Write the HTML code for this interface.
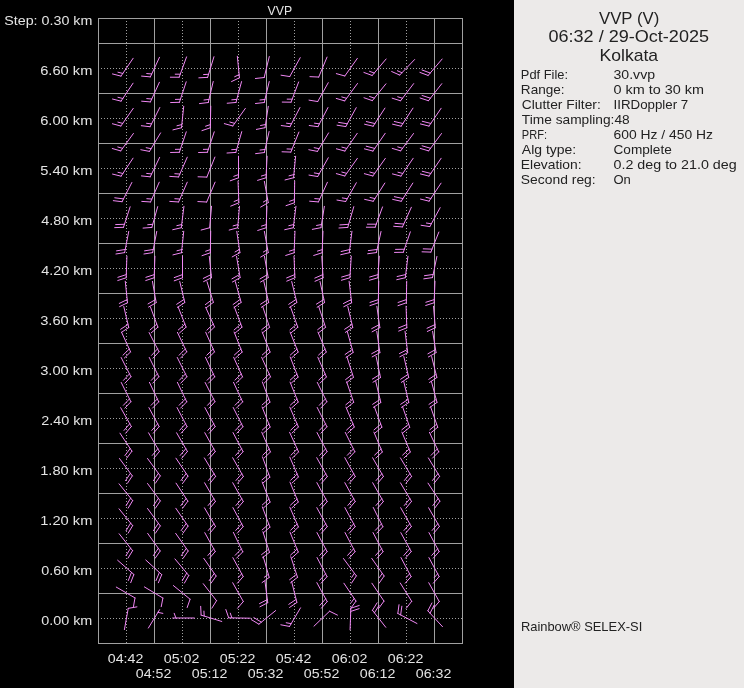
<!DOCTYPE html>
<html><head><meta charset="utf-8"><style>
html,body{margin:0;padding:0;background:#000;width:744px;height:688px;overflow:hidden}
svg{display:block;font-family:"Liberation Sans",sans-serif}
</style></head><body>
<svg width="744" height="688" viewBox="0 0 744 688">
<defs><filter id="gs" x="0" y="0" width="744" height="688" filterUnits="userSpaceOnUse"><feOffset dx="0" dy="0"/></filter></defs>
<rect x="0" y="0" width="744" height="688" fill="#000"/>
<rect x="514" y="0" width="230" height="688" fill="#eceae9"/>
<g shape-rendering="crispEdges">
<rect x="98.5" y="18.5" width="364" height="625" fill="none" stroke="#a0a0a0"/>
<line x1="126.5" y1="21" x2="126.5" y2="643" stroke="#a0a0a0" stroke-dasharray="1 2"/>
<line x1="154.5" y1="18" x2="154.5" y2="643" stroke="#a0a0a0"/>
<line x1="182.5" y1="21" x2="182.5" y2="643" stroke="#a0a0a0" stroke-dasharray="1 2"/>
<line x1="210.5" y1="18" x2="210.5" y2="643" stroke="#a0a0a0"/>
<line x1="238.5" y1="21" x2="238.5" y2="643" stroke="#a0a0a0" stroke-dasharray="1 2"/>
<line x1="266.5" y1="18" x2="266.5" y2="643" stroke="#a0a0a0"/>
<line x1="294.5" y1="21" x2="294.5" y2="643" stroke="#a0a0a0" stroke-dasharray="1 2"/>
<line x1="322.5" y1="18" x2="322.5" y2="643" stroke="#a0a0a0"/>
<line x1="350.5" y1="21" x2="350.5" y2="643" stroke="#a0a0a0" stroke-dasharray="1 2"/>
<line x1="378.5" y1="18" x2="378.5" y2="643" stroke="#a0a0a0"/>
<line x1="406.5" y1="21" x2="406.5" y2="643" stroke="#a0a0a0" stroke-dasharray="1 2"/>
<line x1="434.5" y1="18" x2="434.5" y2="643" stroke="#a0a0a0"/>
<line x1="98" y1="43.5" x2="462" y2="43.5" stroke="#a0a0a0"/>
<line x1="101" y1="68.5" x2="462" y2="68.5" stroke="#a0a0a0" stroke-dasharray="1 2"/>
<line x1="98" y1="93.5" x2="462" y2="93.5" stroke="#a0a0a0"/>
<line x1="101" y1="118.5" x2="462" y2="118.5" stroke="#a0a0a0" stroke-dasharray="1 2"/>
<line x1="98" y1="143.5" x2="462" y2="143.5" stroke="#a0a0a0"/>
<line x1="101" y1="168.5" x2="462" y2="168.5" stroke="#a0a0a0" stroke-dasharray="1 2"/>
<line x1="98" y1="193.5" x2="462" y2="193.5" stroke="#a0a0a0"/>
<line x1="101" y1="218.5" x2="462" y2="218.5" stroke="#a0a0a0" stroke-dasharray="1 2"/>
<line x1="98" y1="243.5" x2="462" y2="243.5" stroke="#a0a0a0"/>
<line x1="101" y1="268.5" x2="462" y2="268.5" stroke="#a0a0a0" stroke-dasharray="1 2"/>
<line x1="98" y1="293.5" x2="462" y2="293.5" stroke="#a0a0a0"/>
<line x1="101" y1="318.5" x2="462" y2="318.5" stroke="#a0a0a0" stroke-dasharray="1 2"/>
<line x1="98" y1="343.5" x2="462" y2="343.5" stroke="#a0a0a0"/>
<line x1="101" y1="368.5" x2="462" y2="368.5" stroke="#a0a0a0" stroke-dasharray="1 2"/>
<line x1="98" y1="393.5" x2="462" y2="393.5" stroke="#a0a0a0"/>
<line x1="101" y1="418.5" x2="462" y2="418.5" stroke="#a0a0a0" stroke-dasharray="1 2"/>
<line x1="98" y1="443.5" x2="462" y2="443.5" stroke="#a0a0a0"/>
<line x1="101" y1="468.5" x2="462" y2="468.5" stroke="#a0a0a0" stroke-dasharray="1 2"/>
<line x1="98" y1="493.5" x2="462" y2="493.5" stroke="#a0a0a0"/>
<line x1="101" y1="518.5" x2="462" y2="518.5" stroke="#a0a0a0" stroke-dasharray="1 2"/>
<line x1="98" y1="543.5" x2="462" y2="543.5" stroke="#a0a0a0"/>
<line x1="101" y1="568.5" x2="462" y2="568.5" stroke="#a0a0a0" stroke-dasharray="1 2"/>
<line x1="98" y1="593.5" x2="462" y2="593.5" stroke="#a0a0a0"/>
<line x1="101" y1="618.5" x2="462" y2="618.5" stroke="#a0a0a0" stroke-dasharray="1 2"/>
</g>
<path d="M133.15 58.25L120.98 76.10M120.98 76.10l-8.53 -2.17M122.78 73.45l-4.85 -1.23 M159.49 57.31L150.36 76.88M150.36 76.88l-8.77 -0.77M151.71 73.98l-4.98 -0.44 M186.54 56.91L179.15 77.21M179.15 77.21l-8.80 0.00M180.24 74.20l-5.00 0.00 M213.95 56.72L207.63 77.37M207.63 77.37l-8.79 0.46M208.57 74.31l-4.99 0.26 M237.33 56.26L239.47 77.75M239.47 77.75l-7.93 3.82M239.16 74.57l-4.51 2.17 M269.29 56.54L264.18 77.52M264.18 77.52l-8.75 0.97 M300.22 57.68L289.75 76.57M289.75 76.57l-8.69 -1.38 M327.03 57.11L318.73 77.05M318.73 77.05l-8.79 -0.40 M357.35 58.39L344.81 75.98M344.81 75.98l-8.48 -2.35 M386.12 58.99L372.17 75.49M372.17 75.49l-8.26 -3.04M374.24 73.04l-4.69 -1.73 M414.67 59.48L399.72 75.07M399.72 75.07l-8.05 -3.55M401.93 72.76l-4.57 -2.02 M442.15 59.01L428.15 75.46M428.15 75.46l-8.25 -3.07M430.22 73.03l-8.25 -3.07 M133.06 83.19L121.05 101.14M121.05 101.14l-8.55 -2.10M122.83 98.48l-4.86 -1.19 M159.41 82.27L150.42 101.91M150.42 101.91l-8.77 -0.71M151.75 99.00l-4.98 -0.40 M186.21 81.80L179.42 102.30M179.42 102.30l-8.80 0.26M180.43 99.27l-5.00 0.15 M213.21 81.52L208.25 102.54M208.25 102.54l-8.74 1.03M208.98 99.42l-4.97 0.58 M241.55 81.60L235.96 102.47M235.96 102.47l-8.77 0.77M236.79 99.38l-4.98 0.44 M269.25 81.53L264.21 102.53M264.21 102.53l-8.74 1.00M264.96 99.42l-4.97 0.57 M298.65 81.95L291.05 102.17M291.05 102.17l-8.80 -0.09M292.18 99.18l-5.00 -0.05 M328.26 82.70L317.72 101.55M317.72 101.55l-8.69 -1.41 M357.49 83.49L344.70 100.90M344.70 100.90l-8.45 -2.47M346.59 98.32l-4.80 -1.40 M385.93 83.83L372.33 100.62M372.33 100.62l-8.32 -2.86M374.35 98.13l-4.73 -1.63 M413.65 83.61L400.56 100.80M400.56 100.80l-8.40 -2.62M402.50 98.25l-4.77 -1.49 M441.76 83.70L428.47 100.72M428.47 100.72l-8.37 -2.72M430.44 98.20l-8.37 -2.72 M133.27 108.33L120.88 126.03M120.88 126.03l-8.50 -2.28M122.71 123.41l-4.83 -1.29 M159.82 107.47L150.08 126.75M150.08 126.75l-8.74 -1.04M151.52 123.89l-4.96 -0.59 M183.73 106.26L181.48 127.75M181.48 127.75l-8.54 2.13M181.81 124.56l-4.85 1.21 M210.77 106.20L210.28 127.80M210.28 127.80l-8.34 2.82M210.35 124.60l-4.74 1.60 M245.35 108.39L232.81 125.98M232.81 125.98l-8.48 -2.35M234.67 123.37l-4.82 -1.34 M268.28 106.34L265.02 127.69M265.02 127.69l-8.63 1.72M265.50 124.52l-4.90 0.98 M299.95 107.53L289.97 126.69M289.97 126.69l-8.72 -1.15M291.45 123.85l-4.96 -0.65 M327.97 107.54L317.96 126.68M317.96 126.68l-8.72 -1.16M319.44 123.85l-4.96 -0.66 M356.22 107.68L345.75 126.57M345.75 126.57l-8.69 -1.38M347.30 123.77l-8.69 -1.38 M384.93 108.10L373.16 126.22M373.16 126.22l-8.57 -1.98M374.91 123.54l-8.57 -1.98 M412.96 108.13L401.13 126.20M401.13 126.20l-8.57 -2.01M402.89 123.52l-8.57 -2.01 M441.15 108.25L428.98 126.10M428.98 126.10l-8.53 -2.17M430.78 123.45l-8.53 -2.17 M133.44 133.45L120.74 150.93M120.74 150.93l-8.46 -2.43M122.62 148.34l-4.81 -1.38 M160.58 132.89L149.45 151.40M149.45 151.40l-8.64 -1.68M151.10 148.66l-4.91 -0.95 M186.28 131.82L179.36 152.28M179.36 152.28l-8.80 0.20M180.38 149.25l-5.00 0.11 M214.26 131.82L207.37 152.29M207.37 152.29l-8.80 0.22M208.39 149.26l-5.00 0.12 M241.75 131.66L235.80 152.42M235.80 152.42l-8.78 0.61M236.68 149.34l-4.99 0.35 M269.13 131.50L264.31 152.55M264.31 152.55l-8.73 1.09M265.03 149.43l-4.96 0.62 M298.92 132.06L290.83 152.09M290.83 152.09l-8.79 -0.31M292.03 149.12l-5.00 -0.17 M328.58 132.89L317.45 151.40M317.45 151.40l-8.64 -1.68M319.10 148.66l-4.91 -0.95 M357.23 133.31L344.91 151.05M344.91 151.05l-8.51 -2.25M346.73 148.42l-4.83 -1.28 M385.20 133.29L372.94 151.07M372.94 151.07l-8.52 -2.22M374.75 148.43l-8.52 -2.22 M413.52 133.51L400.67 150.88M400.67 150.88l-8.44 -2.50M402.57 148.31l-4.79 -1.42 M441.52 133.51L428.67 150.88M428.67 150.88l-8.44 -2.50M430.57 148.31l-8.44 -2.50 M133.03 158.17L121.08 176.16M121.08 176.16l-8.55 -2.07M122.85 173.50l-4.86 -1.18 M159.64 157.38L150.23 176.82M150.23 176.82l-8.75 -0.89M151.63 173.94l-4.97 -0.51 M187.26 157.20L178.55 176.97M178.55 176.97l-8.78 -0.58M179.84 174.04l-4.99 -0.33 M214.92 157.06L206.83 177.09M206.83 177.09l-8.79 -0.31 M238.50 156.20L238.50 177.80M238.50 177.80l-8.27 3.01M238.50 174.60l-4.70 1.71 M267.12 156.22L265.99 177.79M265.99 177.79l-8.42 2.57M266.15 174.59l-4.78 1.46 M295.63 156.25L293.56 177.75M293.56 177.75l-8.52 2.20M293.87 174.57l-4.84 1.25 M328.29 157.72L317.69 176.54M317.69 176.54l-8.68 -1.44M319.26 173.75l-4.93 -0.82 M357.35 158.39L344.81 175.98M344.81 175.98l-8.48 -2.35M346.67 173.37l-4.82 -1.34 M385.32 158.37L372.84 176.00M372.84 176.00l-8.49 -2.32M374.69 173.39l-4.82 -1.32 M413.17 158.26L400.96 176.09M400.96 176.09l-8.52 -2.19M402.77 173.45l-4.84 -1.24 M441.15 158.25L428.98 176.10M428.98 176.10l-8.53 -2.17M430.78 173.45l-8.53 -2.17 M131.86 182.49L122.05 201.73M122.05 201.73l-8.73 -1.07M123.50 198.88l-8.73 -1.07 M159.26 182.20L150.55 201.97M150.55 201.97l-8.78 -0.58M151.84 199.04l-4.99 -0.33 M187.26 182.20L178.55 201.97M178.55 201.97l-8.78 -0.58M179.84 199.04l-4.99 -0.33 M215.11 182.14L206.67 202.02M206.67 202.02l-8.79 -0.46 M238.05 181.21L238.88 202.79M238.88 202.79l-8.15 3.32M238.75 199.60l-4.63 1.89 M264.37 181.39L268.27 202.64M268.27 202.64l-7.59 4.45M267.69 199.49l-4.31 2.53 M294.69 181.20L294.35 202.80M294.35 202.80l-8.32 2.88M294.40 199.60l-4.72 1.64 M327.41 182.27L318.42 201.91M318.42 201.91l-8.77 -0.71M319.75 199.00l-4.98 -0.40 M356.33 182.74L345.66 201.52M345.66 201.52l-8.68 -1.47M347.24 198.74l-4.93 -0.83 M384.84 183.05L373.23 201.27M373.23 201.27l-8.59 -1.90M374.95 198.57l-4.88 -1.08 M412.84 183.05L401.23 201.27M401.23 201.27l-8.59 -1.90M402.95 198.57l-8.59 -1.90 M441.03 183.17L429.08 201.16M429.08 201.16l-8.55 -2.07M430.85 198.50l-4.86 -1.18 M130.15 206.78L123.47 227.32M123.47 227.32l-8.79 0.31M124.46 224.28l-8.79 0.31 M157.69 206.64L151.85 227.43M151.85 227.43l-8.78 0.66M152.71 224.35l-4.99 0.37 M183.94 206.29L181.31 227.73M181.31 227.73l-8.57 1.98M181.70 224.55l-4.87 1.12 M211.53 206.24L209.65 227.76M209.65 227.76l-8.50 2.28 M239.49 206.24L237.68 227.77M237.68 227.77l-8.49 2.31M237.95 224.58l-4.83 1.31 M266.97 206.21L266.11 227.79M266.11 227.79l-8.38 2.68M266.24 224.59l-4.76 1.52 M295.94 206.29L293.31 227.73M293.31 227.73l-8.57 1.98M293.70 224.55l-4.87 1.12 M324.35 206.35L320.97 227.68M320.97 227.68l-8.64 1.68M321.47 224.52l-4.91 0.95 M353.81 206.67L347.75 227.41M347.75 227.41l-8.78 0.57M348.65 224.33l-8.78 0.57 M382.54 206.91L375.15 227.21M375.15 227.21l-8.80 0.00M376.24 224.20l-8.80 0.00 M411.36 207.25L402.47 226.93M402.47 226.93l-8.78 -0.66M403.78 224.02l-8.78 -0.66 M440.17 207.65L429.79 226.60M429.79 226.60l-8.70 -1.33M431.33 223.79l-4.94 -0.76 M128.75 231.42L124.63 252.62M124.63 252.62l-8.69 1.38M125.24 249.48l-8.69 1.38 M156.75 231.42L152.63 252.62M152.63 252.62l-8.69 1.38M153.24 249.48l-8.69 1.38 M183.73 231.26L181.48 252.75M181.48 252.75l-8.54 2.13M181.81 249.56l-4.85 1.21 M210.71 231.20L210.33 252.80M210.33 252.80l-8.32 2.86M210.38 249.60l-4.73 1.63 M236.78 231.33L239.93 252.69M239.93 252.69l-7.74 4.19M239.46 249.53l-4.40 2.38 M264.37 231.39L268.27 252.64M268.27 252.64l-7.59 4.45M267.69 249.49l-4.31 2.53 M294.97 231.21L294.11 252.79M294.11 252.79l-8.38 2.68M294.24 249.59l-4.76 1.52 M322.97 231.21L322.11 252.79M322.11 252.79l-8.38 2.68M322.24 249.59l-4.76 1.52 M351.94 231.29L349.31 252.73M349.31 252.73l-8.57 1.98M349.70 249.55l-8.57 1.98 M381.03 231.48L376.40 252.57M376.40 252.57l-8.72 1.16M377.08 249.45l-8.72 1.16 M410.34 231.84L403.31 252.27M403.31 252.27l-8.80 0.15M404.35 249.24l-8.80 0.15 M438.88 232.04L430.86 252.10M430.86 252.10l-8.80 -0.28M432.05 249.13l-8.80 -0.28 M126.91 256.21L126.16 277.79M126.16 277.79l-8.37 2.72M126.27 274.60l-8.37 2.72 M154.91 256.21L154.16 277.79M154.16 277.79l-8.37 2.72M154.27 274.60l-8.37 2.72 M182.50 256.20L182.50 277.80M182.50 277.80l-8.27 3.01M182.50 274.60l-8.27 3.01 M209.27 256.26L211.52 277.75M211.52 277.75l-7.91 3.86M211.19 274.56l-7.91 3.86 M236.55 256.36L240.12 277.67M240.12 277.67l-7.66 4.33M239.59 274.51l-7.66 4.33 M264.45 256.38L268.20 277.65M268.20 277.65l-7.62 4.40M267.65 274.50l-7.62 4.40 M294.01 256.21L294.91 277.79M294.91 277.79l-8.14 3.35M294.78 274.59l-8.14 3.35 M321.78 256.22L323.10 277.78M323.10 277.78l-8.07 3.51M322.90 274.59l-8.07 3.51 M351.26 256.22L349.87 277.78M349.87 277.78l-8.45 2.47M350.07 274.59l-8.45 2.47 M379.26 256.22L377.87 277.78M377.87 277.78l-8.45 2.47M378.07 274.59l-8.45 2.47 M407.94 256.29L405.31 277.73M405.31 277.73l-8.57 1.98M405.70 274.55l-8.57 1.98 M436.91 256.45L432.50 277.59M432.50 277.59l-8.71 1.26M433.15 274.46l-8.71 1.26 M125.27 281.26L127.52 302.75M127.52 302.75l-7.91 3.86M127.19 299.56l-7.91 3.86 M152.45 281.38L156.20 302.65M156.20 302.65l-7.62 4.40M155.65 299.50l-7.62 4.40 M179.75 281.53L184.79 302.53M184.79 302.53l-7.34 4.86M184.04 299.42l-7.34 4.86 M207.05 281.72L213.37 302.37M213.37 302.37l-7.03 5.30M212.43 299.31l-7.03 5.30 M235.33 281.63L241.14 302.44M241.14 302.44l-7.16 5.12M240.27 299.36l-7.16 5.12 M263.85 281.50L268.70 302.55M268.70 302.55l-7.38 4.79M267.98 299.43l-7.38 4.79 M291.71 281.54L296.82 302.52M296.82 302.52l-7.32 4.88M296.06 299.41l-7.32 4.88 M320.01 281.47L324.57 302.58M324.57 302.58l-7.45 4.69M323.89 299.45l-7.45 4.69 M349.10 281.28L351.66 302.73M351.66 302.73l-7.85 3.97M351.28 299.55l-7.85 3.97 M378.77 281.20L378.28 302.80M378.28 302.80l-8.34 2.82M378.35 299.60l-8.34 2.82 M406.71 281.20L406.33 302.80M406.33 302.80l-8.32 2.86M406.38 299.60l-8.32 2.86 M434.97 281.21L434.11 302.79M434.11 302.79l-8.38 2.68M434.24 299.59l-8.38 2.68 M123.79 306.52L128.75 327.54M128.75 327.54l-7.36 4.83M128.02 324.42l-7.36 4.83 M150.41 306.93L157.90 327.19M157.90 327.19l-6.71 5.69M156.79 324.19l-6.71 5.69 M178.18 307.02L186.09 327.12M186.09 327.12l-6.59 5.83M184.92 324.14l-6.59 5.83 M205.64 307.25L214.53 326.93M214.53 326.93l-6.30 6.15M213.22 324.02l-6.30 6.15 M234.35 306.95L241.95 327.17M241.95 327.17l-6.68 5.73M240.82 324.18l-6.68 5.73 M262.81 306.79L269.56 327.31M269.56 327.31l-6.92 5.44M268.56 324.27l-6.92 5.44 M290.50 306.90L297.82 327.22M297.82 327.22l-6.76 5.63M296.74 324.21l-6.76 5.63 M318.81 306.79L325.56 327.31M325.56 327.31l-6.92 5.44M324.56 324.27l-6.92 5.44 M347.79 306.52L352.75 327.54M352.75 327.54l-7.36 4.83M352.02 324.42l-7.36 4.83 M376.86 306.31L379.86 327.70M379.86 327.70l-7.77 4.13M379.42 324.54l-7.77 4.13 M406.09 306.21L406.84 327.79M406.84 327.79l-8.16 3.30M406.73 324.60l-8.16 3.30 M433.53 306.24L435.30 327.77M435.30 327.77l-7.99 3.68M435.04 324.58l-7.99 3.68 M121.59 332.27L130.58 351.91M130.58 351.91l-6.27 6.18M129.25 349.00l-6.27 6.18 M149.09 332.51L158.99 351.71M158.99 351.71l-5.97 6.47M157.53 348.86l-5.97 6.47 M177.44 332.34L186.70 351.85M186.70 351.85l-6.18 6.27M185.33 348.96l-6.18 6.27 M205.70 332.22L214.49 351.95M214.49 351.95l-6.33 6.11M213.18 349.03l-6.33 6.11 M234.12 332.04L242.14 352.10M242.14 352.10l-6.56 5.87M240.95 349.13l-6.56 5.87 M262.19 332.01L270.08 352.12M270.08 352.12l-6.60 5.82M268.91 349.14l-6.60 5.82 M290.12 332.04L298.14 352.10M298.14 352.10l-6.56 5.87M296.95 349.13l-6.56 5.87 M317.97 332.11L326.27 352.05M326.27 352.05l-6.48 5.96M325.04 349.09l-6.48 5.96 M347.33 331.63L353.14 352.44M353.14 352.44l-7.16 5.12M352.27 349.36l-7.16 5.12 M376.80 331.32L379.91 352.70M379.91 352.70l-7.75 4.17M379.45 349.53l-7.75 4.17 M405.04 331.29L407.71 352.72M407.71 352.72l-7.83 4.01M407.32 349.55l-7.83 4.01 M432.61 331.35L436.07 352.67M436.07 352.67l-7.68 4.29M435.56 349.52l-7.68 4.29 M121.14 357.49L130.95 376.73M130.95 376.73l-6.00 6.44M129.50 373.88l-6.00 6.44 M149.25 357.43L158.86 376.78M158.86 376.78l-6.07 6.37M157.43 373.91l-6.07 6.37 M177.25 357.43L186.86 376.78M186.86 376.78l-6.07 6.37M185.43 373.91l-6.07 6.37 M205.46 357.33L214.69 376.86M214.69 376.86l-6.19 6.26M213.32 373.97l-6.19 6.26 M233.64 357.25L242.53 376.93M242.53 376.93l-6.30 6.15M241.22 374.02l-6.30 6.15 M261.64 357.25L270.53 376.93M270.53 376.93l-6.30 6.15M269.22 374.02l-6.30 6.15 M290.19 357.01L298.08 377.12M298.08 377.12l-6.60 5.82M296.91 374.14l-6.60 5.82 M317.79 357.18L326.41 376.99M326.41 376.99l-6.38 6.06M325.13 374.05l-6.38 6.06 M346.93 356.75L353.46 377.34M353.46 377.34l-6.97 5.37M352.50 374.29l-6.97 5.37 M376.09 356.45L380.50 377.59M380.50 377.59l-7.48 4.64M379.85 374.46l-7.48 4.64 M403.83 356.51L408.72 377.54M408.72 377.54l-7.37 4.81M408.00 374.43l-7.37 4.81 M431.65 356.55L436.87 377.51M436.87 377.51l-7.30 4.92M436.10 374.40l-7.30 4.92 M121.22 382.45L130.89 401.76M130.89 401.76l-6.05 6.39M129.46 398.90l-6.05 6.39 M149.44 382.34L158.70 401.85M158.70 401.85l-6.18 6.27M157.33 398.96l-6.18 6.27 M177.40 382.36L186.73 401.84M186.73 401.84l-6.16 6.29M185.35 398.95l-6.16 6.29 M205.14 382.49L214.95 401.73M214.95 401.73l-6.00 6.44M213.50 398.88l-6.00 6.44 M233.51 382.31L242.64 401.88M242.64 401.88l-6.22 6.22M241.29 398.98l-6.22 6.22 M262.35 381.95L269.95 402.17M269.95 402.17l-6.68 5.73M268.82 399.18l-6.68 5.73 M290.06 382.07L298.19 402.08M298.19 402.08l-6.53 5.90M296.98 399.12l-6.53 5.90 M317.29 382.41L326.83 401.79M326.83 401.79l-6.09 6.35M325.41 398.92l-6.09 6.35 M346.66 381.84L353.69 402.27M353.69 402.27l-6.84 5.54M352.65 399.24l-6.84 5.54 M375.75 381.53L380.79 402.53M380.79 402.53l-7.34 4.86M380.04 399.42l-7.34 4.86 M403.75 381.53L408.79 402.53M408.79 402.53l-7.34 4.86M408.04 399.42l-7.34 4.86 M431.49 381.59L437.00 402.47M437.00 402.47l-7.23 5.02M436.19 399.38l-7.23 5.02 M120.69 407.73L131.33 426.53M131.33 426.53l-5.72 6.69M129.75 423.74l-5.72 6.69 M148.91 407.61L159.15 426.63M159.15 426.63l-5.85 6.57M157.63 423.81l-5.85 6.57 M177.03 407.54L187.04 426.68M187.04 426.68l-5.93 6.50M185.56 423.85l-5.93 6.50 M204.91 407.61L215.15 426.63M215.15 426.63l-5.85 6.57M213.63 423.81l-5.85 6.57 M233.18 407.47L242.92 426.75M242.92 426.75l-6.02 6.41M241.48 423.89l-6.02 6.41 M262.14 407.04L270.12 427.11M270.12 427.11l-6.57 5.85M268.94 424.13l-6.57 5.85 M289.79 407.18L298.41 426.99M298.41 426.99l-6.38 6.06M297.13 424.05l-6.38 6.06 M317.18 407.47L326.92 426.75M326.92 426.75l-6.02 6.41M325.48 423.89l-6.02 6.41 M345.95 407.11L354.28 427.04M354.28 427.04l-6.47 5.97M353.05 424.09l-6.47 5.97 M374.44 406.92L381.87 427.20M381.87 427.20l-6.73 5.67M380.77 424.20l-6.73 5.67 M402.62 406.86L409.72 427.25M409.72 427.25l-6.82 5.56M408.67 424.23l-6.82 5.56 M430.62 406.86L437.72 427.25M437.72 427.25l-6.82 5.56M436.67 424.23l-6.82 5.56 M119.97 433.17L131.92 451.16M131.92 451.16l-5.22 7.08M130.15 448.50l-5.22 7.08 M148.56 432.80L159.43 451.47M159.43 451.47l-5.63 6.76M157.82 448.70l-5.63 6.76 M176.60 432.78L187.40 451.49M187.40 451.49l-5.66 6.74M185.80 448.72l-5.66 6.74 M204.78 432.68L215.25 451.57M215.25 451.57l-5.77 6.64M213.70 448.77l-5.77 6.64 M233.01 432.55L243.06 451.68M243.06 451.68l-5.92 6.51M241.57 448.84l-5.92 6.51 M261.74 432.20L270.45 451.97M270.45 451.97l-6.35 6.09M269.16 449.04l-6.35 6.09 M289.59 432.27L298.58 451.91M298.58 451.91l-6.27 6.18M297.25 449.00l-6.27 6.18 M317.01 432.55L327.06 451.68M327.06 451.68l-5.92 6.51M325.57 448.84l-5.92 6.51 M345.29 432.41L354.83 451.79M354.83 451.79l-6.09 6.35M353.41 448.92l-6.09 6.35 M373.89 432.14L382.33 452.02M382.33 452.02l-6.44 6.00M381.08 449.08l-6.44 6.00 M401.89 432.14L410.33 452.02M410.33 452.02l-6.44 6.00M409.08 449.08l-6.44 6.00 M429.44 432.34L438.70 451.85M438.70 451.85l-6.18 6.27M437.33 448.96l-6.18 6.27 M119.48 458.51L132.33 475.88M132.33 475.88l-4.86 7.34M130.43 473.31l-4.86 7.34 M147.53 458.48L160.29 475.91M160.29 475.91l-4.90 7.31M158.40 473.33l-4.90 7.31 M175.95 458.18L187.94 476.15M187.94 476.15l-5.21 7.09M186.16 473.49l-5.21 7.09 M204.37 457.92L215.59 476.37M215.59 476.37l-5.50 6.87M213.93 473.64l-5.50 6.87 M232.69 457.73L243.33 476.53M243.33 476.53l-5.72 6.69M241.75 473.74l-5.72 6.69 M262.46 456.91L269.85 477.21M269.85 477.21l-6.74 5.66M268.76 474.20l-6.74 5.66 M289.79 457.18L298.41 476.99M298.41 476.99l-6.38 6.06M297.13 474.05l-6.38 6.06 M316.76 457.69L327.27 476.56M327.27 476.56l-5.76 6.65M325.71 473.77l-5.76 6.65 M344.82 457.66L355.22 476.59M355.22 476.59l-5.80 6.62M353.68 473.78l-5.80 6.62 M372.62 457.77L383.39 476.50M383.39 476.50l-5.67 6.73M381.79 473.72l-5.67 6.73 M400.42 457.89L411.55 476.40M411.55 476.40l-5.54 6.84M409.90 473.66l-5.54 6.84 M428.37 457.92L439.59 476.37M439.59 476.37l-5.50 6.87M437.93 473.64l-5.50 6.87 M119.07 483.83L132.67 500.62M132.67 500.62l-4.53 7.54M130.65 498.13l-4.53 7.54 M147.53 483.48L160.29 500.91M160.29 500.91l-4.90 7.31M158.40 498.33l-4.90 7.31 M176.04 483.13L187.87 501.20M187.87 501.20l-5.27 7.05M186.11 498.52l-5.27 7.05 M204.58 482.79L215.41 501.48M215.41 501.48l-5.64 6.75M213.81 498.71l-5.64 6.75 M232.73 482.71L243.30 501.55M243.30 501.55l-5.74 6.67M241.73 498.76l-5.74 6.67 M262.19 482.01L270.08 502.12M270.08 502.12l-6.60 5.82M268.91 499.14l-6.60 5.82 M289.97 482.11L298.27 502.05M298.27 502.05l-6.48 5.96M297.04 499.09l-6.48 5.96 M316.87 482.63L327.18 501.61M327.18 501.61l-5.83 6.59M325.65 498.80l-5.83 6.59 M344.82 482.66L355.22 501.59M355.22 501.59l-5.80 6.62M353.68 498.78l-5.80 6.62 M372.69 482.73L383.33 501.53M383.33 501.53l-5.72 6.69M381.75 498.74l-5.72 6.69 M400.49 482.84L411.49 501.44M411.49 501.44l-5.59 6.80M409.86 498.68l-5.59 6.80 M428.04 483.13L439.87 501.20M439.87 501.20l-5.27 7.05M438.11 498.52l-5.27 7.05 M119.07 508.83L132.67 525.62M132.67 525.62l-4.53 7.54M130.65 523.13l-4.53 7.54 M147.53 508.48L160.29 525.91M160.29 525.91l-4.90 7.31M158.40 523.33l-4.90 7.31 M175.83 508.26L188.04 526.09M188.04 526.09l-5.12 7.16M186.23 523.45l-5.12 7.16 M204.49 507.84L215.49 526.44M215.49 526.44l-5.59 6.80M213.86 523.68l-5.59 6.80 M232.91 507.61L243.15 526.63M243.15 526.63l-5.85 6.57M241.63 523.81l-5.85 6.57 M262.37 506.95L269.93 527.18M269.93 527.18l-6.69 5.72M268.81 524.18l-6.69 5.72 M289.79 507.18L298.41 526.99M298.41 526.99l-6.38 6.06M297.13 524.05l-6.38 6.06 M316.83 507.65L327.21 526.60M327.21 526.60l-5.81 6.61M325.67 523.79l-5.81 6.61 M344.91 507.61L355.15 526.63M355.15 526.63l-5.85 6.57M353.63 523.81l-5.85 6.57 M373.25 507.43L382.86 526.78M382.86 526.78l-6.07 6.37M381.43 523.91l-6.07 6.37 M400.69 507.73L411.33 526.53M411.33 526.53l-5.72 6.69M409.75 523.74l-5.72 6.69 M428.62 507.77L439.39 526.50M439.39 526.50l-5.67 6.73M437.79 523.72l-5.67 6.73 M119.15 533.77L132.60 550.67M132.60 550.67l-4.60 7.50M130.61 548.17l-4.60 7.50 M147.66 533.38L160.18 550.99M160.18 550.99l-5.00 7.24M158.32 548.38l-5.00 7.24 M175.68 533.37L188.16 551.00M188.16 551.00l-5.01 7.23M186.31 548.39l-5.01 7.23 M204.78 532.68L215.25 551.57M215.25 551.57l-5.77 6.64M213.70 548.77l-5.77 6.64 M233.36 532.38L242.77 551.82M242.77 551.82l-6.14 6.31M241.37 548.94l-6.14 6.31 M262.93 531.75L269.46 552.34M269.46 552.34l-6.97 5.37M268.50 549.29l-6.97 5.37 M289.97 532.11L298.27 552.05M298.27 552.05l-6.48 5.96M297.04 549.09l-6.48 5.96 M316.94 532.59L327.12 551.64M327.12 551.64l-5.88 6.55M325.61 548.82l-5.88 6.55 M345.01 532.55L355.06 551.68M355.06 551.68l-5.92 6.51M353.57 548.84l-5.92 6.51 M373.01 532.55L383.06 551.68M383.06 551.68l-5.92 6.51M381.57 548.84l-5.92 6.51 M400.82 532.66L411.22 551.59M411.22 551.59l-5.80 6.62M409.68 548.78l-5.80 6.62 M428.94 532.59L439.12 551.64M439.12 551.64l-5.88 6.55M437.61 548.82l-5.88 6.55 M117.62 560.23L133.87 574.46M133.87 574.46l-3.18 8.20M131.47 572.35l-3.18 8.20 M145.80 560.03L161.73 574.62M161.73 574.62l-3.37 8.13M159.37 572.46l-3.37 8.13 M174.95 558.93L188.77 575.53M188.77 575.53l-4.43 7.61M186.72 573.07l-4.43 7.61 M203.77 558.31L216.09 576.05M216.09 576.05l-5.07 7.19M214.27 573.42l-5.07 7.19 M232.85 557.64L243.19 576.60M243.19 576.60l-5.82 6.60M241.66 573.79l-3.31 3.75 M263.25 556.66L269.20 577.42M269.20 577.42l-7.12 5.17M268.32 574.34l-4.05 2.94 M290.85 556.78L297.53 577.32M297.53 577.32l-6.93 5.42M296.54 574.28l-6.93 5.42 M317.03 557.54L327.04 576.68M327.04 576.68l-5.93 6.50M325.56 573.85l-5.93 6.50 M343.48 558.51L356.33 575.88M356.33 575.88l-4.86 7.34M354.43 573.31l-2.76 4.17 M371.73 558.33L384.12 576.03M384.12 576.03l-5.05 7.21M382.29 573.41l-2.87 4.10 M400.96 557.58L411.10 576.65M411.10 576.65l-5.89 6.54M409.60 573.83l-3.35 3.72 M428.91 557.61L439.15 576.63M439.15 576.63l-5.85 6.57M437.63 573.81l-3.33 3.73 M116.28 587.10L134.99 597.90M134.99 597.90l-1.53 8.67 M144.39 586.92L162.90 598.05M162.90 598.05l-1.68 8.64 M173.37 585.53L190.08 599.21M190.08 599.21l-2.91 8.31 M203.24 583.70L216.53 600.72M216.53 600.72l-4.66 7.46 M232.71 582.72L243.31 601.54M243.31 601.54l-5.73 6.68 M264.98 581.30L267.76 602.72M267.76 602.72l-7.81 4.05M267.35 599.55l-7.81 4.05 M291.65 581.55L296.87 602.51M296.87 602.51l-7.30 4.92M296.10 599.40l-7.30 4.92 M316.85 582.64L327.19 601.60M327.19 601.60l-5.82 6.60M325.66 598.79l-5.82 6.60 M343.90 583.22L355.98 601.12M355.98 601.12l-5.17 7.12M354.19 598.47l-2.94 4.05 M371.90 583.22L383.98 601.12M383.98 601.12l-5.17 7.12 M400.25 582.99L411.69 601.31M411.69 601.31l-5.42 6.93 M428.76 582.69L439.27 601.56M439.27 601.56l-5.76 6.65 M124.41 629.61L128.24 608.35M128.24 608.35l8.67 -1.50 M148.35 628.07L159.61 609.64M157.94 612.37l4.90 0.99 M194.30 618.00L172.70 618.00M175.90 618.00l-1.71 -4.70 M221.78 621.45L201.13 615.13M201.13 615.13l-0.46 -8.79M204.19 616.07l-0.26 -4.99 M250.30 618.21L228.70 617.83M228.70 617.83l-2.86 -8.32M231.90 617.88l-1.63 -4.73 M275.67 610.57L258.88 624.17M258.88 624.17l-7.54 -4.53M261.37 622.15l-7.54 -4.53 M300.52 607.85L289.50 626.43M289.50 626.43l-8.65 -1.63M291.13 623.68l-4.91 -0.93 M313.98 626.17L329.57 611.22M329.57 611.22l7.90 3.89 M350.09 629.79L350.84 608.21M350.84 608.21l8.37 -2.72M350.73 611.40l8.37 -2.72 M385.78 627.29L372.45 610.29M372.45 610.29l4.65 -7.47M374.43 612.81l4.65 -7.47 M416.95 623.49L397.82 613.44M397.82 613.44l1.18 -8.72M400.66 614.93l1.18 -8.72 M442.49 626.69L427.87 610.79M427.87 610.79l4.05 -7.81M430.03 613.14l4.05 -7.81" fill="none" stroke="#f088f4" stroke-width="1.0" stroke-linecap="round" stroke-linejoin="round" shape-rendering="auto"/>
<g filter="url(#gs)">
<text x="4.20" y="25" font-size="12.6" fill="#e4e4e4" textLength="88.16" lengthAdjust="spacingAndGlyphs">Step: 0.30 km</text>
<text x="40.20" y="74.6" font-size="12.6" fill="#e4e4e4" textLength="52.20" lengthAdjust="spacingAndGlyphs">6.60 km</text>
<text x="40.20" y="124.6" font-size="12.6" fill="#e4e4e4" textLength="52.20" lengthAdjust="spacingAndGlyphs">6.00 km</text>
<text x="40.20" y="174.6" font-size="12.6" fill="#e4e4e4" textLength="52.20" lengthAdjust="spacingAndGlyphs">5.40 km</text>
<text x="41.20" y="224.6" font-size="12.6" fill="#e4e4e4" textLength="51.14" lengthAdjust="spacingAndGlyphs">4.80 km</text>
<text x="41.20" y="274.6" font-size="12.6" fill="#e4e4e4" textLength="51.14" lengthAdjust="spacingAndGlyphs">4.20 km</text>
<text x="40.20" y="324.6" font-size="12.6" fill="#e4e4e4" textLength="52.20" lengthAdjust="spacingAndGlyphs">3.60 km</text>
<text x="40.20" y="374.6" font-size="12.6" fill="#e4e4e4" textLength="52.20" lengthAdjust="spacingAndGlyphs">3.00 km</text>
<text x="41.20" y="424.6" font-size="12.6" fill="#e4e4e4" textLength="51.16" lengthAdjust="spacingAndGlyphs">2.40 km</text>
<text x="40.20" y="474.6" font-size="12.6" fill="#e4e4e4" textLength="52.20" lengthAdjust="spacingAndGlyphs">1.80 km</text>
<text x="40.20" y="524.6" font-size="12.6" fill="#e4e4e4" textLength="52.20" lengthAdjust="spacingAndGlyphs">1.20 km</text>
<text x="41.20" y="574.6" font-size="12.6" fill="#e4e4e4" textLength="51.16" lengthAdjust="spacingAndGlyphs">0.60 km</text>
<text x="41.20" y="624.6" font-size="12.6" fill="#e4e4e4" textLength="51.16" lengthAdjust="spacingAndGlyphs">0.00 km</text>
<text x="267.60" y="14.7" font-size="12.6" fill="#e4e4e4" textLength="24.54" lengthAdjust="spacingAndGlyphs">VVP</text>
<text x="107.80" y="663" font-size="12.6" fill="#e4e4e4" textLength="35.54" lengthAdjust="spacingAndGlyphs">04:42</text>
<text x="135.80" y="677.5" font-size="12.6" fill="#e4e4e4" textLength="35.54" lengthAdjust="spacingAndGlyphs">04:52</text>
<text x="163.80" y="663" font-size="12.6" fill="#e4e4e4" textLength="35.54" lengthAdjust="spacingAndGlyphs">05:02</text>
<text x="191.80" y="677.5" font-size="12.6" fill="#e4e4e4" textLength="35.54" lengthAdjust="spacingAndGlyphs">05:12</text>
<text x="219.80" y="663" font-size="12.6" fill="#e4e4e4" textLength="35.54" lengthAdjust="spacingAndGlyphs">05:22</text>
<text x="247.80" y="677.5" font-size="12.6" fill="#e4e4e4" textLength="35.54" lengthAdjust="spacingAndGlyphs">05:32</text>
<text x="275.80" y="663" font-size="12.6" fill="#e4e4e4" textLength="35.54" lengthAdjust="spacingAndGlyphs">05:42</text>
<text x="303.80" y="677.5" font-size="12.6" fill="#e4e4e4" textLength="35.54" lengthAdjust="spacingAndGlyphs">05:52</text>
<text x="331.80" y="663" font-size="12.6" fill="#e4e4e4" textLength="35.54" lengthAdjust="spacingAndGlyphs">06:02</text>
<text x="359.80" y="677.5" font-size="12.6" fill="#e4e4e4" textLength="35.54" lengthAdjust="spacingAndGlyphs">06:12</text>
<text x="387.80" y="663" font-size="12.6" fill="#e4e4e4" textLength="35.54" lengthAdjust="spacingAndGlyphs">06:22</text>
<text x="415.80" y="677.5" font-size="12.6" fill="#e4e4e4" textLength="35.54" lengthAdjust="spacingAndGlyphs">06:32</text>
</g>
<g filter="url(#gs)">
<text x="599.00" y="23.5" font-size="16.4" fill="#222222" textLength="60.22" lengthAdjust="spacingAndGlyphs">VVP (V)</text>
<text x="548.50" y="42.3" font-size="16.4" fill="#222222" textLength="160.52" lengthAdjust="spacingAndGlyphs">06:32 / 29-Oct-2025</text>
<text x="599.50" y="60.9" font-size="16.4" fill="#222222" textLength="58.64" lengthAdjust="spacingAndGlyphs">Kolkata</text>
<text x="520.85" y="79.2" font-size="12.6" fill="#222222" textLength="47.17" lengthAdjust="spacingAndGlyphs">Pdf File:</text>
<text x="613.50" y="79.2" font-size="12.6" fill="#222222" textLength="41.56" lengthAdjust="spacingAndGlyphs">30.vvp</text>
<text x="520.85" y="94.2" font-size="12.6" fill="#222222" textLength="43.75" lengthAdjust="spacingAndGlyphs">Range:</text>
<text x="613.50" y="94.2" font-size="12.6" fill="#222222" textLength="90.43" lengthAdjust="spacingAndGlyphs">0 km to 30 km</text>
<text x="521.85" y="109.2" font-size="12.6" fill="#222222" textLength="78.88" lengthAdjust="spacingAndGlyphs">Clutter Filter:</text>
<text x="613.50" y="109.2" font-size="12.6" fill="#222222" textLength="74.76" lengthAdjust="spacingAndGlyphs">IIRDoppler 7</text>
<text x="521.85" y="124.2" font-size="12.6" fill="#222222" textLength="107.87" lengthAdjust="spacingAndGlyphs">Time sampling:48</text>
<text x="521.85" y="139.2" font-size="12.6" fill="#222222" textLength="25.18" lengthAdjust="spacingAndGlyphs">PRF:</text>
<text x="613.50" y="139.2" font-size="12.6" fill="#222222" textLength="99.42" lengthAdjust="spacingAndGlyphs">600 Hz / 450 Hz</text>
<text x="521.85" y="154.2" font-size="12.6" fill="#222222" textLength="54.43" lengthAdjust="spacingAndGlyphs">Alg type:</text>
<text x="613.50" y="154.2" font-size="12.6" fill="#222222" textLength="58.26" lengthAdjust="spacingAndGlyphs">Complete</text>
<text x="520.85" y="169.2" font-size="12.6" fill="#222222" textLength="60.75" lengthAdjust="spacingAndGlyphs">Elevation:</text>
<text x="613.50" y="169.2" font-size="12.6" fill="#222222" textLength="123.14" lengthAdjust="spacingAndGlyphs">0.2 deg to 21.0 deg</text>
<text x="520.85" y="184.2" font-size="12.6" fill="#222222" textLength="74.83" lengthAdjust="spacingAndGlyphs">Second reg:</text>
<text x="613.50" y="184.2" font-size="12.6" fill="#222222" textLength="17.36" lengthAdjust="spacingAndGlyphs">On</text>
<text x="520.90" y="631" font-size="12.6" fill="#222222" textLength="121.33" lengthAdjust="spacingAndGlyphs">Rainbow® SELEX-SI</text>
</g>
</svg>
</body></html>
